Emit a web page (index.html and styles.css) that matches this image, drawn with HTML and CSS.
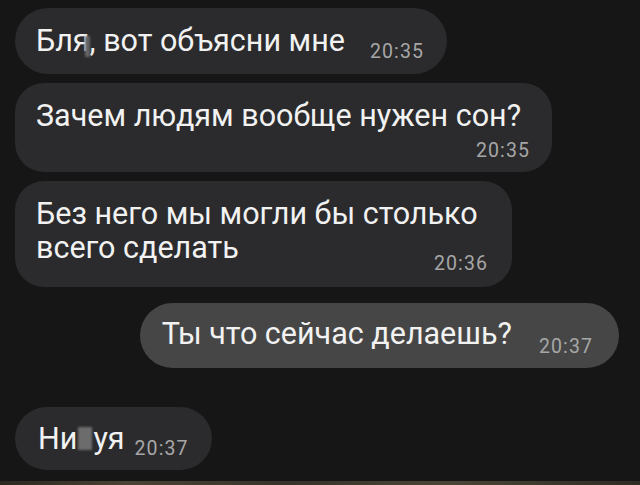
FILE: index.html
```html
<!DOCTYPE html>
<html lang="ru">
<head>
<meta charset="utf-8">
<title>Чат</title>
<link rel="stylesheet" href="styles.css">
</head>
<body>
    <div class="chat">
        <div class="bubble in first">
            <div class="row">
                <span class="text">Бля<span class="blur thin"></span>, вот объясни мне</span>
                <span class="time">20:35</span>
            </div>
        </div>
        <div class="bubble in second">
            <div class="row">
                <span class="text">Зачем людям вообще нужен сон?</span>
            </div>
            <div class="row end">
                <span class="time">20:35</span>
            </div>
        </div>
        <div class="bubble in third">
            <div class="row">
                <span class="text">Без него мы могли бы столько</span>
            </div>
            <div class="row split">
                <span class="text">всего сделать</span>
                <span class="time">20:36</span>
            </div>
        </div>
        <div class="bubble out">
            <div class="row">
                <span class="text">Ты что сейчас делаешь?</span>
                <span class="time">20:37</span>
            </div>
        </div>
        <div class="bubble in last">
            <div class="row">
                <span class="text">Ни<span class="blur"></span>уя</span>
                <span class="time short">20:37</span>
            </div>
        </div>
    </div>
    <div class="strip"></div>
</body>
</html>
```

FILE: styles.css
```css
@charset "utf-8";

* {
    margin: 0;
    box-sizing: border-box;
}

html {
    height: 100%;
}

body {
    background: #161616;
    color: #f2f2f2;
    font-family: "Roboto", "Liberation Sans", sans-serif;
    height: 100%;
    display: flex;
    flex-direction: column;
    overflow: hidden;
}

.chat {
    flex: 1;
    display: flex;
    flex-direction: column;
    padding: 8px 21px 0 15px;
}

.bubble {
    display: flex;
    flex-direction: column;
    background: #2b2b2d;
    border-radius: 33px;
    padding: 16px 23px 16px 21px;
}

.bubble.in {
    align-self: flex-start;
}

.bubble.out {
    align-self: flex-end;
    background: #464646;
    padding: 14px 26px 17px 22px;
    margin-top: 16px;
}

.second, .third {
    margin-top: 9px;
    border-radius: 29px;
}

.second {
    width: 537px;
    padding-right: 22px;
    padding-bottom: 12px;
}

.third {
    width: 497px;
    padding-right: 24px;
    padding-bottom: 22px;
}

.last {
    margin-top: 39px;
    padding: 15px 23px 14px 23px;
}

.row {
    display: flex;
    align-items: flex-end;
}

.row.end {
    justify-content: flex-end;
    margin-top: 8px;
}

.row.split {
    justify-content: space-between;
}

.text {
    font-size: 30.5px;
    line-height: 34px;
    white-space: nowrap;
}

.time {
    font-size: 19.5px;
    line-height: 19px;
    letter-spacing: 1.1px;
    color: #a6a6a6;
    margin-left: 25px;
    margin-bottom: -3px;
}

.row.end .time {
    margin-bottom: 0;
}

.row.split .time {
    margin-bottom: -8px;
}

.out .time {
    margin-left: 27px;
    margin-bottom: -5px;
}

.time.short {
    margin-left: 10px;
    margin-bottom: -2px;
}

.blur {
    display: inline-block;
    width: 14px;
    height: 23px;
    margin: 0 1px -1px;
    background: #6c6c6c;
    filter: blur(1px);
}

.blur.thin {
    width: 5px;
    height: 21px;
    margin: 0 0 -6px -5px;
    background: #666;
}

.strip {
    height: 4px;
    background: linear-gradient(90deg, #2c2820, #4a4234 20%, #37322a 45%, #4b4536 70%, #2f2b24);
}
```
